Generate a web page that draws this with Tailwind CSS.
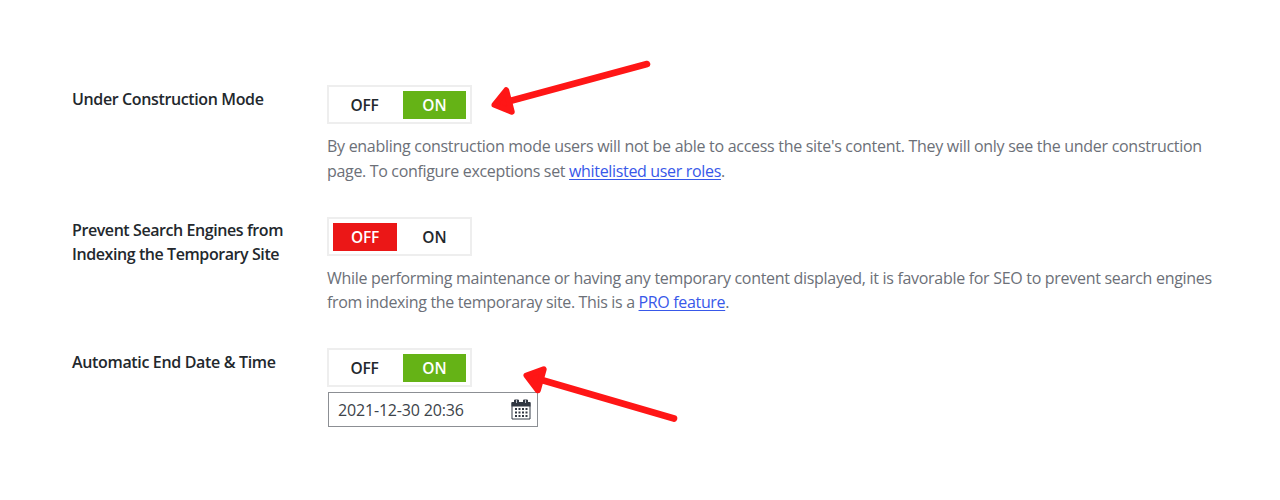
<!DOCTYPE html>
<html lang="en">
<head>
<meta charset="utf-8">
<title>Under Construction Settings</title>
<script src="https://cdn.jsdelivr.net/npm/@tailwindcss/browser@4"></script>
</head>
<body class="relative h-[500px] w-[1280px] overflow-hidden bg-white font-['Open_Sans','Noto_Sans',sans-serif] text-[#6c7078]">
<main class="grid grid-cols-[255px_1fr] grid-rows-[132px_131px_auto] pt-[85px] pl-[72px] text-[16px]">
  <h2 class="pt-[2px] text-[16px] leading-[24px] font-[550] tracking-[-0.37px] whitespace-nowrap text-[#23282d]">Under Construction Mode</h2>
  <section>
    <div class="flex h-[39px] w-[145px] justify-between border-2 border-[#eeeeee] py-[4px] pr-[4px] pl-[4px] text-[15.5px] font-semibold">
      <span class="flex h-[28px] w-[63px] items-center justify-center pt-[2px] tracking-[-0.2px] text-[#23282d]">OFF</span>
      <span class="flex h-[28px] w-[63px] items-center justify-center bg-[#65b316] pt-[2px] text-white">ON</span>
    </div>
    <p class="mt-[9.5px] leading-[25px] tracking-[-0.289px] whitespace-nowrap">By enabling construction mode users will not be able to access the site's content. They will only see the under construction<br><span class="tracking-[-0.33px]">page. To configure exceptions set <a class="text-[#3858e9] underline decoration-1 underline-offset-2">whitelisted user roles</a>.</span></p>
  </section>

  <h2 class="pt-px text-[16px] leading-[24px] font-[550] tracking-[-0.42px] whitespace-nowrap text-[#23282d]">Prevent Search Engines from<br>Indexing the Temporary Site</h2>
  <section>
    <div class="flex h-[39px] w-[145px] justify-between border-2 border-[#eeeeee] py-[4px] pr-[4px] pl-[4px] text-[15.5px] font-semibold">
      <span class="flex h-[28px] w-[64px] items-center justify-center bg-[#eb1717] pt-[2px] tracking-[-0.2px] text-white">OFF</span>
      <span class="flex h-[28px] w-[63px] items-center justify-center pt-[2px] text-[#23282d]">ON</span>
    </div>
    <p class="mt-[9.5px] leading-[24.75px] tracking-[-0.3px] whitespace-nowrap">While performing maintenance or having any temporary content displayed, it is favorable for SEO to prevent search engines<br><span class="tracking-[-0.34px]">from indexing the temporaray site. This is a <a class="text-[#3858e9] underline decoration-1 underline-offset-2">PRO feature</a>.</span></p>
  </section>

  <h2 class="pt-[2px] text-[16px] leading-[24px] font-[550] tracking-[-0.34px] whitespace-nowrap text-[#23282d]">Automatic End Date &amp; Time</h2>
  <section>
    <div class="flex h-[39px] w-[145px] justify-between border-2 border-[#eeeeee] py-[4px] pr-[4px] pl-[4px] text-[15.5px] font-semibold">
      <span class="flex h-[28px] w-[63px] items-center justify-center pt-[2px] tracking-[-0.2px] text-[#23282d]">OFF</span>
      <span class="flex h-[28px] w-[63px] items-center justify-center bg-[#65b316] pt-[2px] text-white">ON</span>
    </div>
    <div class="mt-[5px] ml-px flex h-[35px] w-[210px] items-center justify-between border border-[#8c8f94] pr-[6px] pl-[9px] text-[16px] text-[#3c434a]">
      <span class="whitespace-nowrap tracking-[-0.17px]">2021-12-30 20:36</span>
      <svg class="h-[22px] w-[20px]" viewBox="0 0 20 22" fill="none">
        <path d="M1 4H19V20H1Z" fill="#fff" stroke="#353c48"/>
        <path d="M.5 3H19.5V7.5H.5Z" fill="#303742"/>
        <path d="M3.5 1H7.5V4.5H3.5ZM12.5 1H16.5V4.5H12.5Z" fill="#303742" stroke="#303742" stroke-linejoin="round"/>
        <path d="M5.5 1V4M14.5 1V4" stroke="#b5bac4"/>
        <path d="M4 9h2v2H4zM7.5 9h2v2h-2zM11 9h2v2h-2zM14.5 9h2v2h-2zM4 12.5h2v2H4zM7.5 12.5h2v2h-2zM11 12.5h2v2h-2zM14.5 12.5h2v2h-2zM4 16h2v2H4zM7.5 16h2v2h-2zM11 16h2v2h-2zM14.5 16h2v2h-2z" fill="#303742"/>
      </svg>
    </div>
  </section>
</main>
<svg class="pointer-events-none absolute inset-0 h-[500px] w-[1280px]" viewBox="0 0 1280 500" fill="#ff1616" stroke="#ff1616" stroke-linecap="round" stroke-linejoin="round">
  <path d="M647 64L510 101" stroke-width="6.6" fill="none"/>
  <path d="M494.5 104.8L506.2 90.3L511.7 111.8Z" stroke-width="6"/>
  <path d="M674 418.5L540 379.5" stroke-width="6.6" fill="none"/>
  <path d="M526.5 375.5L543.7 369.3L537.9 390.3Z" stroke-width="6"/>
</svg>
</body>
</html>
